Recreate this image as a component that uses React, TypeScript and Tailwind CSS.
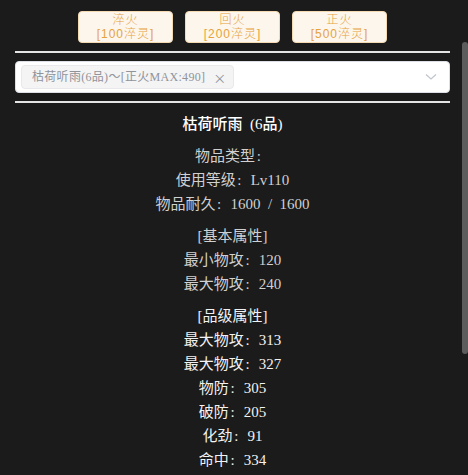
import React from "react";

const serif = { fontFamily: '"Liberation Serif", "Noto Sans CJK SC", serif' };

function Row({ label, value }: { label: string; value: string }) {
  return (
    <div className="flex items-baseline">
      <span>{label}</span>
      <span className="inline-block w-[7.5px] text-center">:</span>
      <span className="inline-block w-[7.5px]" />
      <span>{value}</span>
    </div>
  );
}

export default function App() {
  const buttons = [
    ["淬火", "[100淬灵]"],
    ["回火", "[200淬灵]"],
    ["正火", "[500淬灵]"],
  ];
  return (
    <div className="relative w-[468px] h-[475px] overflow-hidden bg-[#1b1b1b]">
      <div className="pl-[15px] pr-[18px] pt-[11px]">
        <div className="flex justify-center gap-[12px]">
          {buttons.map(([a, b]) => (
            <div
              key={a}
              className="w-[95px] h-[32px] rounded-[4px] bg-[#fdf6ec] border border-[#f5dab1] text-[#e6a23c] flex flex-col items-center justify-center text-[12px] leading-[14px] tracking-[1px] font-light"
              style={{ fontFamily: '"Liberation Sans", "Noto Sans CJK SC", sans-serif' }}
            >
              <div className="h-[14px] leading-[14px]">{a}</div>
              <div className="h-[14px] leading-[14px]">{b}</div>
            </div>
          ))}
        </div>
        <div className="mt-[8px] h-[2px] bg-[#e4e4e4]" />
        <div className="mt-[8px] h-[32px] rounded-[4px] bg-white border border-[#dcdfe6] flex items-center pl-[5px] pr-[12px]">
          <div
            className="h-[24px] rounded-[4px] bg-[#f4f4f5] border border-[#e9e9eb] text-[#909399] text-[12px] flex items-center pl-[10px] pr-[7px] gap-[8px]"
            style={serif}
          >
            <span className="tracking-[0.3px]">枯荷听雨(6品)～[正火MAX:490]</span>
            <span className="text-[13px] leading-none" style={{ fontFamily: '"Noto Sans CJK SC", sans-serif' }}>×</span>
          </div>
          <div className="flex-1" />
          <svg width="12" height="8" viewBox="0 0 12 8">
            <polyline points="1,1.5 6,6 11,1.5" fill="none" stroke="#c0c4cc" strokeWidth="1.2" />
          </svg>
        </div>
        <div className="mt-[8px] h-[2px] bg-[#e4e4e4]" />
        <div className="mt-[9px] flex flex-col items-center text-[15px] leading-[24px] [word-spacing:0.25em]" style={serif}>
          <div className="text-white font-medium">枯荷听雨 (6品)</div>
          <div className="mt-[8px] flex flex-col items-center text-[#d0d0d0]">
            <Row label="物品类型" value="" />
            <Row label="使用等级" value="Lv110" />
            <Row label="物品耐久" value="1600 / 1600" />
          </div>
          <div className="mt-[8px] flex flex-col items-center text-[#d0d0d0]">
            <div>[基本属性]</div>
            <Row label="最小物攻" value="120" />
            <Row label="最大物攻" value="240" />
          </div>
          <div className="mt-[8px] flex flex-col items-center text-[#f2f2f2]">
            <div>[品级属性]</div>
            <Row label="最大物攻" value="313" />
            <Row label="最大物攻" value="327" />
            <Row label="物防" value="305" />
            <Row label="破防" value="205" />
            <Row label="化劲" value="91" />
            <Row label="命中" value="334" />
          </div>
        </div>
      </div>
      <div className="absolute right-0 top-[42px] w-[6px] h-[312px] rounded-[3px] bg-[#5c5c5c]" />
    </div>
  );
}
